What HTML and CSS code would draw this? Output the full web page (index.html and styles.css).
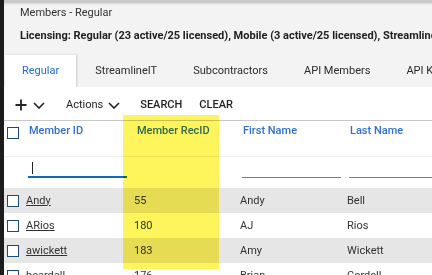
FILE: index.html
```html
<!DOCTYPE html>
<html>
<head>
<meta charset="utf-8">
<link rel="stylesheet" href="styles.css">
</head>
<body>
<div class="app">
  <div class="rail"></div>
  <div class="main">
    <div class="header">
      <div class="title">Members - Regular</div>
      <div class="licensing">Licensing: Regular (23 active/25 licensed), Mobile (3 active/25 licensed), StreamlineIT (2 active/5 licensed)</div>
      <div class="tabs">
        <div class="tab active">Regular</div>
        <div class="tab">StreamlineIT</div>
        <div class="tab">Subcontractors</div>
        <div class="tab">API Members</div>
        <div class="tab">API Keys</div>
      </div>
    </div>
    <div class="content">
      <div class="toolbar">
        <svg class="ico-plus" width="12" height="12" viewBox="0 0 12 12"><path d="M6 0.5V11.5M0.5 6H11.5" stroke="#222" stroke-width="1.8" fill="none"/></svg>
        <svg class="ico-chev first-chev" width="12" height="7" viewBox="0 0 12 7"><path d="M1 1L6 6L11 1" stroke="#222" stroke-width="1.6" fill="none"/></svg>
        <span class="tb-text actions">Actions</span>
        <svg class="ico-chev" width="12" height="7" viewBox="0 0 12 7"><path d="M1 1L6 6L11 1" stroke="#222" stroke-width="1.6" fill="none"/></svg>
        <span class="tb-text btn search">SEARCH</span>
        <span class="tb-text btn clear">CLEAR</span>
      </div>
      <div class="grid-row head-row">
        <div class="cell-check"><span class="checkbox"></span></div>
        <div class="hcell">Member ID</div>
        <div class="hcell">Member RecID</div>
        <div class="hcell">First Name</div>
        <div class="hcell">Last Name</div>
      </div>
      <div class="grid-row filter-row">
        <div></div>
        <div class="fcell"><div class="finput focused"><span class="caret"></span></div></div>
        <div class="fcell"></div>
        <div class="fcell"><div class="finput"></div></div>
        <div class="fcell"><div class="finput"></div></div>
      </div>
      <div class="grid-row data-row alt">
        <div class="cell-check"><span class="checkbox"></span></div>
        <div class="dcell"><a class="link">Andy</a></div>
        <div class="dcell">55</div>
        <div class="dcell">Andy</div>
        <div class="dcell">Bell</div>
      </div>
      <div class="grid-row data-row">
        <div class="cell-check"><span class="checkbox"></span></div>
        <div class="dcell"><a class="link">ARios</a></div>
        <div class="dcell">180</div>
        <div class="dcell">AJ</div>
        <div class="dcell">Rios</div>
      </div>
      <div class="grid-row data-row alt">
        <div class="cell-check"><span class="checkbox"></span></div>
        <div class="dcell"><a class="link">awickett</a></div>
        <div class="dcell">183</div>
        <div class="dcell">Amy</div>
        <div class="dcell">Wickett</div>
      </div>
      <div class="grid-row data-row">
        <div class="cell-check"><span class="checkbox"></span></div>
        <div class="dcell"><a class="link">beardall</a></div>
        <div class="dcell">176</div>
        <div class="dcell">Brian</div>
        <div class="dcell">Cordell</div>
      </div>
    </div>
  </div>
  <div class="highlight"></div>
</div>
</body>
</html>
```
FILE: styles.css
```css
html, body {
  margin: 0;
  padding: 0;
  width: 432px;
  height: 275px;
  overflow: hidden;
  background: #ffffff;
  font-family: Roboto, "Liberation Sans", sans-serif;
  font-size: 11px;
  line-height: 14px;
  color: #333333;
}

.app {
  position: relative;
  display: flex;
  width: 432px;
  height: 275px;
  overflow: hidden;
}

.rail {
  flex: 0 0 4px;
  background: #1c1c1c;
}

.main {
  flex: 1 1 auto;
  min-width: 0;
  display: flex;
  flex-direction: column;
}

.header {
  background: #f3f3f3;
  border-top: 3px solid #c9c9c9;
  box-shadow: inset 0 2px 2px -1px rgba(0,0,0,0.12);
}

.title {
  margin-top: 3px;
  padding-left: 16px;
  color: #333333;
  white-space: nowrap;
}

.licensing {
  margin-top: 9px;
  padding-left: 16px;
  font-weight: 700;
  color: #222222;
  white-space: nowrap;
  overflow: hidden;
}

.tabs {
  margin-top: 12px;
  display: flex;
  height: 32px;
  padding-left: 1px;
  white-space: nowrap;
}

.tab {
  display: flex;
  align-items: center;
  padding: 0 17px;
  margin-right: 2px;
  color: #2b2b2b;
  flex: 0 0 auto;
}

.tab.active {
  background: #ffffff;
  color: #1f6fd6;
  box-shadow: 1px 0 2px rgba(0,0,0,0.18);
}

.content {
  background: #ffffff;
  flex: 1 1 auto;
}

.toolbar {
  display: flex;
  align-items: center;
  padding: 11px 0 8px 11px;
  border-bottom: 1px solid #c8c8c8;
  height: 14px;
}

.ico-plus { flex: 0 0 auto; }
.ico-chev { flex: 0 0 auto; margin-left: 5px; }
.first-chev { margin-left: 6px; }

.tb-text {
  color: #222222;
  white-space: nowrap;
}

.actions { margin-left: 21px; }
.btn { font-weight: 500; }
.search { margin-left: 20px; }
.clear { margin-left: 17px; }

.grid-row {
  display: grid;
  grid-template-columns: 22px 108px 106px 107px 1fr;
}

.head-row {
  height: 35px;
  border-bottom: 1px solid #ececec;
  align-items: start;
}

.head-row .cell-check { padding-top: 6px; }

.hcell {
  padding-top: 3px;
  padding-left: 3px;
  color: #2f6fd6;
  font-weight: 500;
  white-space: nowrap;
}

.cell-check {
  padding-left: 3px;
  display: flex;
  align-items: center;
}

.checkbox {
  display: block;
  width: 10px;
  height: 10px;
  border: 1.5px solid #1c4b78;
  background: #ffffff;
}

.filter-row {
  height: 31px;
}

.fcell {
  padding-top: 3px;
}

.finput {
  position: relative;
  margin-left: 2px;
  width: 99px;
  height: 17px;
  border-bottom: 1px solid #7a7a7a;
}

.finput.focused {
  height: 16px;
  border-bottom: 2px solid #1565c0;
}

.caret {
  position: absolute;
  left: 4px;
  top: 2px;
  width: 1px;
  height: 12px;
  background: #222222;
}

.data-row {
  height: 25px;
  align-items: center;
  background: #ffffff;
}

.data-row.alt {
  background: #e6e6e6;
}

.dcell {
  color: #333333;
  white-space: nowrap;
}

.link {
  color: #333333;
  text-decoration: underline;
}

.highlight {
  position: absolute;
  left: 123px;
  top: 115px;
  width: 96px;
  height: 154px;
  background: #fef45c;
  mix-blend-mode: multiply;
  pointer-events: none;
}
```
